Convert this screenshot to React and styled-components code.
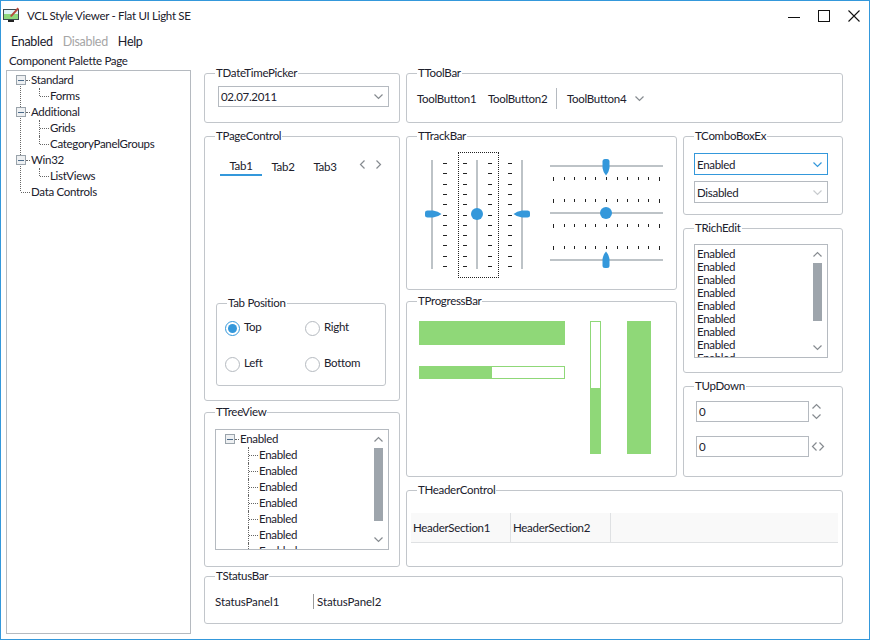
import React from 'react';
import styled, { createGlobalStyle } from 'styled-components';

const Global = createGlobalStyle`
  html, body { margin: 0; padding: 0; background: #fff; }
  body { font-family: Lato, "Liberation Sans", sans-serif; font-size: 11.5px; letter-spacing: -0.3px; color: #20202c; }
`;

const Window = styled.div`
  width: 870px;
  height: 640px;
  box-sizing: border-box;
  border: 1px solid #3498db;
  display: flex;
  flex-direction: column;
  overflow: hidden;
`;

const TitleBar = styled.div`
  height: 29px;
  flex: none;
  display: flex;
  align-items: center;
  padding-left: 2px;
  gap: 7px;
`;

const Title = styled.span`
  flex: 1;
`;

const WinButton = styled.div`
  width: 30px;
  height: 29px;
  display: flex;
  align-items: center;
  justify-content: center;
`;

const WinButtons = styled.div`
  display: flex;
`;

const MenuBar = styled.div`
  height: 22px;
  flex: none;
  display: flex;
  align-items: center;
  gap: 10px;
  padding-left: 10px;
`;

const MenuItem = styled.span`
  font-size: 12.5px;
  color: ${(p) => (p.$disabled ? '#a6a6a6' : '#20202c')};
`;

const Body = styled.div`
  flex: 1;
  display: flex;
`;

const Side = styled.div`
  width: 185px;
  flex: none;
  margin: 0 13px 0 5px;
`;

const SideLabel = styled.div`
  height: 18px;
  line-height: 18px;
  padding-left: 3px;
`;

const TreeBox = styled.div`
  height: 564px;
  box-sizing: border-box;
  border: 1px solid #b5bac0;
`;

const Tree = styled.div`
  position: relative;
  padding: 1px 0 0 9px;
`;

const Trunk = styled.span`
  position: absolute;
  left: 13px;
  top: 15px;
  height: 105px;
  border-left: 1px dotted #666;
`;

const Node = styled.div`
  position: relative;
  height: 16px;
  line-height: 16px;
  display: flex;
  align-items: center;
  white-space: nowrap;
  padding-left: ${(p) => (p.$child ? '24px' : '0')};
  ${(p) =>
    p.$child &&
    `&::before {
      content: '';
      position: absolute;
      left: 23px;
      top: 0;
      height: ${p.$last ? '50%' : '100%'};
      border-left: 1px dotted #666;
    }`}
`;

const Expander = styled.span`
  position: relative;
  z-index: 1;
  width: 10px;
  height: 10px;
  box-sizing: border-box;
  border: 1px solid #9aa3ab;
  background: #eef0f2;
  display: flex;
  align-items: center;
  justify-content: center;
  flex: none;
  &::after {
    content: '';
    width: 6px;
    height: 1px;
    background: #4a6a8a;
  }
`;

const Dots = styled.span`
  width: ${(p) => p.$w || 4}px;
  margin: 0 1px 0 ${(p) => p.$ml || 0}px;
  border-top: 1px dotted #666;
  flex: none;
`;

const Content = styled.div`
  display: flex;
  flex-direction: column;
  padding-top: 21px;
`;

const Row = styled.div`
  display: flex;
  gap: 6px;
`;

const Column = styled.div`
  display: flex;
  flex-direction: column;
`;

const Group = styled.div`
  position: relative;
  box-sizing: border-box;
  flex: none;
  width: ${(p) => p.$w}px;
  height: ${(p) => p.$h}px;
  margin-top: ${(p) => p.$mt || 0}px;
  border: 1px solid #c2c6cb;
  border-radius: 3px;
`;

const Legend = styled.span`
  position: absolute;
  top: -9px;
  left: 10px;
  height: 15px;
  line-height: 15px;
  padding: 0 1px;
  background: #fff;
  white-space: nowrap;
`;

const Combo = styled.div`
  box-sizing: border-box;
  width: ${(p) => p.$w}px;
  height: ${(p) => p.$h}px;
  border: 1px solid ${(p) => (p.$focus ? '#3498db' : '#b5bac0')};
  display: flex;
  align-items: center;
  justify-content: space-between;
  padding: 0 4px 0 2px;
`;

const DatePad = styled.div`
  padding: 12px 0 0 13px;
`;

const ChevronSvg = styled.svg`
  display: block;
  flex: none;
`;

const Chevron = ({ dir = 'down', color = '#868b90', narrow }) => {
  const d = {
    down: 'M1.5 3.5 L5.5 7.5 L9.5 3.5',
    up: 'M1.5 7.5 L5.5 3.5 L9.5 7.5',
    left: 'M7.5 1.5 L3.5 5.5 L7.5 9.5',
    right: 'M3.5 1.5 L7.5 5.5 L3.5 9.5',
  }[dir];
  return (
    <ChevronSvg
      width={narrow ? 7 : 11}
      height="11"
      viewBox={narrow ? '2 0 7 11' : '0 0 11 11'}
      fill="none"
      stroke={color}
      strokeWidth="1.2"
    >
      <path d={d} />
    </ChevronSvg>
  );
};

const Tabs = styled.div`
  display: flex;
  align-items: flex-start;
  box-sizing: border-box;
  height: 166px;
  padding: 20px 0 0 15px;
`;

const Tab = styled.div`
  width: 42px;
  text-align: center;
  line-height: 17px;
  margin-top: ${(p) => (p.$active ? 0 : 1)}px;
  border-bottom: ${(p) => (p.$active ? '2px solid #3498db' : '0')};
`;

const TabArrows = styled.div`
  display: flex;
  gap: 5px;
  margin-left: 11px;
  padding-top: 2px;
`;

const InnerGroupWrap = styled.div`
  padding-left: 11px;
`;

const RadioGrid = styled.div`
  display: grid;
  grid-template-columns: 80px 80px;
  grid-auto-rows: 36px;
  padding: 12px 0 0 8px;
`;

const Radio = styled.label`
  display: flex;
  align-items: center;
  gap: 4px;
  height: 24px;
  line-height: 22px;
`;

const RadioText = styled.span`
  height: 22px;
  margin-bottom: 2px;
`;

const RadioDot = styled.span`
  width: 15px;
  height: 15px;
  box-sizing: border-box;
  border-radius: 50%;
  border: 1px solid ${(p) => (p.$on ? '#3498db' : '#b5bac0')};
  display: flex;
  align-items: center;
  justify-content: center;
  &::after {
    content: '';
    width: 9px;
    height: 9px;
    border-radius: 50%;
    background: ${(p) => (p.$on ? '#3498db' : 'transparent')};
  }
`;

const ListBox = styled.div`
  box-sizing: border-box;
  width: ${(p) => p.$w}px;
  height: ${(p) => p.$h}px;
  margin: ${(p) => p.$m};
  border: 1px solid #b5bac0;
  display: flex;
  overflow: hidden;
`;

const ListBody = styled.div`
  flex: 1;
  overflow: hidden;
  padding-top: ${(p) => p.$pt || 0}px;
`;

const Scroll = styled.div`
  width: 15px;
  margin-right: 2px;
  flex: none;
  display: flex;
  flex-direction: column;
  align-items: center;
  padding: 4px 0;
  box-sizing: border-box;
`;

const Thumb = styled.div`
  width: 9px;
  height: ${(p) => p.$h}px;
  margin: 3px 0 auto;
  background: #9ea5ac;
`;

const Line = styled.div`
  height: 13px;
  line-height: 13px;
  padding-left: 2px;
`;

const ToolRow = styled.div`
  display: flex;
  align-items: center;
  box-sizing: border-box;
  height: 100%;
  padding: 1px 0 0 10px;
`;

const ToolBtn = styled.span`
  flex: none;
  width: ${(p) => p.$w}px;
  white-space: nowrap;
`;

const ToolSep = styled.span`
  width: 1px;
  height: 21px;
  background: #b5bac0;
  margin-right: 10px;
`;

const TrackArea = styled.div`
  display: flex;
  align-items: flex-start;
  padding: 16px 0 0 17px;
`;

const FocusCell = styled.div`
  width: 39px;
  height: 124px;
  margin: 0 9px 0 11px;
  outline: 1px dotted #222;
`;

const HTracks = styled.div`
  display: flex;
  flex-direction: column;
  gap: 14px;
  margin-left: 18px;
  padding-top: 4px;
`;

const TrackSvg = styled.svg`
  display: block;
  flex: none;
`;

const Gauges = styled.div`
  display: flex;
  padding: 19px 0 0 12px;
`;

const HBars = styled.div`
  width: 146px;
  display: flex;
  flex-direction: column;
  gap: 21px;
  margin-right: 25px;
`;

const HBar = styled.div`
  box-sizing: border-box;
  height: ${(p) => p.$h}px;
  border: 1px solid #8fd878;
  background: linear-gradient(to right, #8fd878 ${(p) => p.$pct}%, #fff ${(p) => p.$pct}%);
`;

const VBar = styled.div`
  box-sizing: border-box;
  width: ${(p) => p.$w}px;
  height: 133px;
  margin-right: ${(p) => p.$mr || 0}px;
  border: 1px solid #8fd878;
  background: linear-gradient(to top, #8fd878 ${(p) => p.$pct}%, #fff ${(p) => p.$pct}%);
`;

const ComboStack = styled.div`
  display: flex;
  flex-direction: column;
  gap: 6px;
  padding: 16px 0 0 10px;
`;

const SpinRows = styled.div`
  display: flex;
  flex-direction: column;
  gap: 14px;
  padding: 14px 0 0 12px;
`;

const SpinRow = styled.div`
  display: flex;
  align-items: center;
  gap: 2px;
`;

const SpinEdit = styled.div`
  box-sizing: border-box;
  width: 113px;
  height: 21px;
  line-height: 19px;
  border: 1px solid #b5bac0;
  padding-left: 2px;
`;

const SpinButtons = styled.div`
  display: flex;
  flex-direction: ${(p) => (p.$row ? 'row' : 'column')};
  svg + svg {
    margin-top: ${(p) => (p.$row ? 0 : -1)}px;
  }
`;

const HeaderBar = styled.div`
  display: flex;
  height: 30px;
  box-sizing: border-box;
  margin: 22px 4px 0;
  background: #f9f9f9;
  border-bottom: 1px solid #dfe1e3;
`;

const HeaderSection = styled.div`
  width: 100px;
  box-sizing: border-box;
  border-right: 1px solid #dfe1e3;
  line-height: 29px;
  padding-left: 2px;
`;

const Status = styled.div`
  display: flex;
  align-items: center;
  box-sizing: border-box;
  height: 100%;
  padding: 3px 0 0 10px;
`;

const StatusPanel = styled.div`
  width: ${(p) => p.$w}px;
  height: 15px;
  line-height: 15px;
  letter-spacing: -0.1px;
  padding-left: ${(p) => (p.$sep ? 3 : 0)}px;
  border-left: ${(p) => (p.$sep ? '1px solid #999' : '0')};
`;

const BLUE = '#3498db';
const RAIL = '#bdc3c7';
const TICK = '#222';
const steps = [0, 1, 2, 3, 4, 5, 6, 7, 8, 9, 10];

const AppIcon = () => (
  <svg width="17" height="17" viewBox="0 0 17 17">
    <rect x="0.5" y="2.5" width="15" height="10" fill="#dff3f6" stroke="#3a4a50" />
    <path d="M1 12 V7 H15 V12 Z" fill="#8ed87c" />
    <path d="M7 9 L14.5 0.5 L16 2 L8.5 10 Z" fill="#b5483c" />
    <rect x="5" y="13" width="6" height="2" fill="#222" />
  </svg>
);

// vertical track bar, x positions are local to its own svg
const VTrack = ({ w, rail, ticks, thumb }) => (
  <TrackSvg width={w} height="124" viewBox={`0 0 ${w} 124`}>
    <rect x={rail} y="7" width="2" height="109" fill={RAIL} />
    {ticks.map((x) =>
      steps.map((i) => <rect key={`${x}-${i}`} x={x} y={Math.round(10 + i * 10.3)} width="4" height="1" fill={TICK} />)
    )}
    {thumb}
  </TrackSvg>
);

const HTrack = ({ h, rail, ticks, thumb }) => (
  <TrackSvg width="116" height={h} viewBox={`0 0 116 ${h}`}>
    <rect x="1" y={rail} width="113" height="2" fill={RAIL} />
    {ticks.map((y) =>
      steps.map((i) => (
        <rect key={`${y}-${i}`} x={Math.round(4 + i * 10.6)} y={y} width="1" height={i === 0 || i === 10 ? 4 : 3} fill={TICK} />
      ))
    )}
    {thumb}
  </TrackSvg>
);

const children = [0, 1, 2, 3, 4, 5, 6];
const lines = [0, 1, 2, 3, 4, 5, 6, 7, 8];

export default function App() {
  return (
    <Window>
      <Global />
      <TitleBar>
        <AppIcon />
        <Title>VCL Style Viewer - Flat UI Light SE</Title>
        <WinButtons>
          <WinButton>
            <svg width="14" height="14" viewBox="0 0 14 14"><rect x="1" y="8" width="12" height="1" fill="#111" /></svg>
          </WinButton>
          <WinButton>
            <svg width="14" height="14" viewBox="0 0 14 14" fill="none" stroke="#111"><rect x="1.5" y="1.5" width="11" height="11" /></svg>
          </WinButton>
          <WinButton>
            <svg width="14" height="14" viewBox="0 0 14 14" fill="none" stroke="#111" strokeWidth="1.1"><path d="M1.5 1.5 L12.5 12.5 M12.5 1.5 L1.5 12.5" /></svg>
          </WinButton>
        </WinButtons>
      </TitleBar>
      <MenuBar>
        <MenuItem>Enabled</MenuItem>
        <MenuItem $disabled>Disabled</MenuItem>
        <MenuItem>Help</MenuItem>
      </MenuBar>
      <Body>
        <Side>
          <SideLabel>Component Palette Page</SideLabel>
          <TreeBox>
            <Tree>
              <Trunk />
              <Node><Expander /><Dots />Standard</Node>
              <Node $child $last><Dots $w={9} />Forms</Node>
              <Node><Expander /><Dots />Additional</Node>
              <Node $child><Dots $w={9} />Grids</Node>
              <Node $child $last><Dots $w={9} />CategoryPanelGroups</Node>
              <Node><Expander /><Dots />Win32</Node>
              <Node $child $last><Dots $w={9} />ListViews</Node>
              <Node><Dots $w={9} $ml={5} />Data Controls</Node>
            </Tree>
          </TreeBox>
        </Side>
        <Content>
          <Row>
            <Column>
              <Group $w={196} $h={50}>
                <Legend>TDateTimePicker</Legend>
                <DatePad>
                  <Combo $w={171} $h={21}>02.07.2011<Chevron /></Combo>
                </DatePad>
              </Group>
              <Group $w={196} $h={265} $mt={13}>
                <Legend>TPageControl</Legend>
                <Tabs>
                  <Tab $active>Tab1</Tab>
                  <Tab>Tab2</Tab>
                  <Tab>Tab3</Tab>
                  <TabArrows>
                    <Chevron dir="left" />
                    <Chevron dir="right" />
                  </TabArrows>
                </Tabs>
                <InnerGroupWrap>
                  <Group $w={170} $h={83}>
                    <Legend>Tab Position</Legend>
                    <RadioGrid>
                      <Radio><RadioDot $on /><RadioText>Top</RadioText></Radio>
                      <Radio><RadioDot /><RadioText>Right</RadioText></Radio>
                      <Radio><RadioDot /><RadioText>Left</RadioText></Radio>
                      <Radio><RadioDot /><RadioText>Bottom</RadioText></Radio>
                    </RadioGrid>
                  </Group>
                </InnerGroupWrap>
              </Group>
              <Group $w={196} $h={155} $mt={11}>
                <Legend>TTreeView</Legend>
                <ListBox $w={174} $h={121} $m="16px 0 0 10px">
                  <ListBody>
                    <Tree>
                      <Node><Expander /><Dots />Enabled</Node>
                      {children.map((i) => (
                        <Node key={i} $child><Dots $w={9} />Enabled</Node>
                      ))}
                    </Tree>
                  </ListBody>
                  <Scroll>
                    <Chevron dir="up" />
                    <Thumb $h={73} />
                    <Chevron />
                  </Scroll>
                </ListBox>
              </Group>
            </Column>
            <Column>
              <Group $w={437} $h={50}>
                <Legend>TToolBar</Legend>
                <ToolRow>
                  <ToolBtn $w={71}>ToolButton1</ToolBtn>
                  <ToolBtn $w={68}>ToolButton2</ToolBtn>
                  <ToolSep />
                  <ToolBtn $w={67}>ToolButton4</ToolBtn>
                  <Chevron />
                </ToolRow>
              </Group>
              <Row>
                <Column>
                  <Group $w={271} $h={154} $mt={13}>
                    <Legend>TTrackBar</Legend>
                    <TrackArea>
                      <VTrack
                        w={24}
                        rail={7}
                        ticks={[19]}
                        thumb={<path d="M1 59.5 Q1 57.5 3.5 57.5 H9 Q14 58 17.5 61 Q14 64 9 64.5 H3.5 Q1 64.5 1 62.5 Z" fill={BLUE} />}
                      />
                      <FocusCell>
                        <VTrack
                          w={39}
                          rail={17}
                          ticks={[4, 29]}
                          thumb={<circle cx="18" cy="61" r="6" fill={BLUE} />}
                        />
                      </FocusCell>
                      <VTrack
                        w={24}
                        rail={14}
                        ticks={[1]}
                        thumb={<path d="M23 59.5 Q23 57.5 20.5 57.5 H15 Q10 58 6.5 61 Q10 64 15 64.5 H20.5 Q23 64.5 23 62.5 Z" fill={BLUE} />}
                      />
                      <HTracks>
                        <HTrack
                          h={26}
                          rail={8}
                          ticks={[20]}
                          thumb={<path d="M53.5 4.5 Q53.5 2 56 2 H58 Q60.5 2 60.5 4.5 V11 Q60 15 57 18.5 Q54 15 53.5 11 Z" fill={BLUE} />}
                        />
                        <HTrack
                          h={33}
                          rail={15}
                          ticks={[2, 27]}
                          thumb={<circle cx="57" cy="16" r="6" fill={BLUE} />}
                        />
                        <HTrack
                          h={26}
                          rail={15}
                          ticks={[2]}
                          thumb={<path d="M53.5 21.5 Q53.5 24 56 24 H58 Q60.5 24 60.5 21.5 V15 Q60 11 57 7.5 Q54 11 53.5 15 Z" fill={BLUE} />}
                        />
                      </HTracks>
                    </TrackArea>
                  </Group>
                  <Group $w={271} $h={176} $mt={11}>
                    <Legend>TProgressBar</Legend>
                    <Gauges>
                      <HBars>
                        <HBar $h={24} $pct={100} />
                        <HBar $h={13} $pct={50} />
                      </HBars>
                      <VBar $w={11} $mr={26} $pct={50} />
                      <VBar $w={24} $pct={100} />
                    </Gauges>
                  </Group>
                </Column>
                <Column>
                  <Group $w={160} $h={79} $mt={13}>
                    <Legend>TComboBoxEx</Legend>
                    <ComboStack>
                      <Combo $w={134} $h={22} $focus>Enabled<Chevron color={BLUE} /></Combo>
                      <Combo $w={134} $h={22}>Disabled<Chevron color="#c8cbce" /></Combo>
                    </ComboStack>
                  </Group>
                  <Group $w={160} $h={145} $mt={13}>
                    <Legend>TRichEdit</Legend>
                    <ListBox $w={134} $h={114} $m="15px 0 0 10px">
                      <ListBody $pt={2}>
                        {lines.map((i) => <Line key={i}>Enabled</Line>)}
                      </ListBody>
                      <Scroll>
                        <Chevron dir="up" />
                        <Thumb $h={58} />
                        <Chevron />
                      </Scroll>
                    </ListBox>
                  </Group>
                  <Group $w={160} $h={91} $mt={13}>
                    <Legend>TUpDown</Legend>
                    <SpinRows>
                      <SpinRow>
                        <SpinEdit>0</SpinEdit>
                        <SpinButtons>
                          <Chevron dir="up" />
                          <Chevron />
                        </SpinButtons>
                      </SpinRow>
                      <SpinRow>
                        <SpinEdit>0</SpinEdit>
                        <SpinButtons $row>
                          <Chevron dir="left" narrow />
                          <Chevron dir="right" narrow />
                        </SpinButtons>
                      </SpinRow>
                    </SpinRows>
                  </Group>
                </Column>
              </Row>
              <Group $w={437} $h={77} $mt={13}>
                <Legend>THeaderControl</Legend>
                <HeaderBar>
                  <HeaderSection>HeaderSection1</HeaderSection>
                  <HeaderSection>HeaderSection2</HeaderSection>
                </HeaderBar>
              </Group>
            </Column>
          </Row>
          <Group $w={639} $h={48} $mt={9}>
            <Legend>TStatusBar</Legend>
            <Status>
              <StatusPanel $w={98}>StatusPanel1</StatusPanel>
              <StatusPanel $sep $w={100}>StatusPanel2</StatusPanel>
            </Status>
          </Group>
        </Content>
      </Body>
    </Window>
  );
}
